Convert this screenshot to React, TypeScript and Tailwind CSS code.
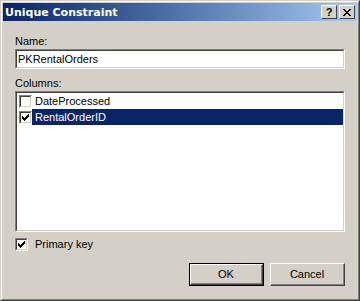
import React from "react";

const font = { fontFamily: '"Liberation Sans", Arial, sans-serif' };
const titleFont = { fontFamily: '"DejaVu Sans", Verdana, sans-serif' };

function Check({ checked }: { checked: boolean }) {
  return (
    <div className="w-[13px] h-[13px] border-t border-l border-[#808080] border-r border-b border-r-white border-b-white shrink-0">
      <div className="w-[11px] h-[11px] border-t border-l border-[#404040] border-r border-b border-r-[#d4d0c8] border-b-[#d4d0c8] bg-white flex items-center justify-center">
        {checked && (
          <svg width="7" height="7" viewBox="0 0 7 7" shapeRendering="crispEdges">
            <path d="M0 2h1v3H0zM1 3h1v3H1zM2 4h1v3H2zM3 3h1v3H3zM4 2h1v3H4zM5 1h1v3H5zM6 0h1v3H6z" fill="#000" />
          </svg>
        )}
      </div>
    </div>
  );
}

function Btn({ label, def }: { label: string; def?: boolean }) {
  const inner = (
    <div className="h-full border-t border-l border-white border-r border-b border-r-[#404040] border-b-[#404040]">
      <div className="h-full border-r border-b border-[#808080] border-t-0 border-l-0 flex items-center justify-center text-[11px] text-black">
        {label}
      </div>
    </div>
  );
  return def ? (
    <div className="w-[75px] h-[23px] border border-black">{inner}</div>
  ) : (
    <div className="w-[75px] h-[23px]">{inner}</div>
  );
}

export default function App() {
  return (
    <div style={font} className="w-[360px] h-[301px] bg-[#d4d0c8] border-t border-l border-[#d4d0c8] border-r border-b border-r-[#404040] border-b-[#404040] select-none">
      <div className="h-full border-t border-l border-white border-r border-b border-r-[#808080] border-b-[#808080] p-[1px] flex flex-col">
        <div className="h-[18px] flex items-center pl-[2px] pr-[2px] bg-gradient-to-r from-[#0a246a] to-[#a6caf0]">
          <span style={titleFont} className="text-white font-bold text-[11px] flex-1 leading-none">Unique Constraint</span>
          <div className="flex gap-[2px]">
            <div className="w-[16px] h-[14px] bg-[#d4d0c8] border-t border-l border-white border-r border-b border-r-[#404040] border-b-[#404040] flex items-center justify-center">
              <span className="text-[11px] font-bold leading-none text-black">?</span>
            </div>
            <div className="w-[16px] h-[14px] bg-[#d4d0c8] border-t border-l border-white border-r border-b border-r-[#404040] border-b-[#404040] flex items-center justify-center">
              <svg width="8" height="7" viewBox="0 0 8 7" shapeRendering="crispEdges">
                <path d="M0 0h2v1H0zM6 0h2v1H6zM1 1h2v1H1zM5 1h2v1H5zM2 2h4v1H2zM3 3h2v1H3zM2 4h4v1H2zM1 5h2v1H1zM5 5h2v1H5zM0 6h2v1H0zM6 6h2v1H6z" fill="#000" />
              </svg>
            </div>
          </div>
        </div>
        <div className="flex-1 flex flex-col pl-[12px] pr-[12px] text-[11px] text-black">
          <div className="mt-[14px] leading-[13px]">Name:</div>
          <div className="mt-[1px] h-[20px] border-t border-l border-[#808080] border-r border-b border-r-white border-b-white">
            <div className="h-full border-t border-l border-[#404040] border-r border-b border-r-[#d4d0c8] border-b-[#d4d0c8] bg-white flex items-center pl-[1px]">
              PKRentalOrders
            </div>
          </div>
          <div className="mt-[8px] leading-[13px]">Columns:</div>
          <div className="mt-[1px] h-[141px] border-t border-l border-[#808080] border-r border-b border-r-white border-b-white">
            <div className="h-full border-t border-l border-[#404040] border-r border-b border-r-[#d4d0c8] border-b-[#d4d0c8] bg-white">
              <div className="h-[16px] flex items-start pl-[2px]">
                <div className="mt-[2px]">
                  <Check checked={false} />
                </div>
                <span className="pl-[3px] pr-[2px] h-[16px] flex items-center">DateProcessed</span>
              </div>
              <div className="h-[16px] flex items-start pl-[2px]">
                <div className="mt-[2px]">
                  <Check checked={true} />
                </div>
                <span className="pl-[3px] h-[16px] flex items-center flex-1 bg-[#0a246a] text-white">RentalOrderID</span>
              </div>
            </div>
          </div>
          <div className="mt-[6px] flex items-center h-[13px]">
            <Check checked={true} />
            <span className="ml-[7px]">Primary key</span>
          </div>
          <div className="mt-[12px] flex justify-end gap-[6px]">
            <Btn label="OK" def />
            <Btn label="Cancel" />
          </div>
        </div>
      </div>
    </div>
  );
}
